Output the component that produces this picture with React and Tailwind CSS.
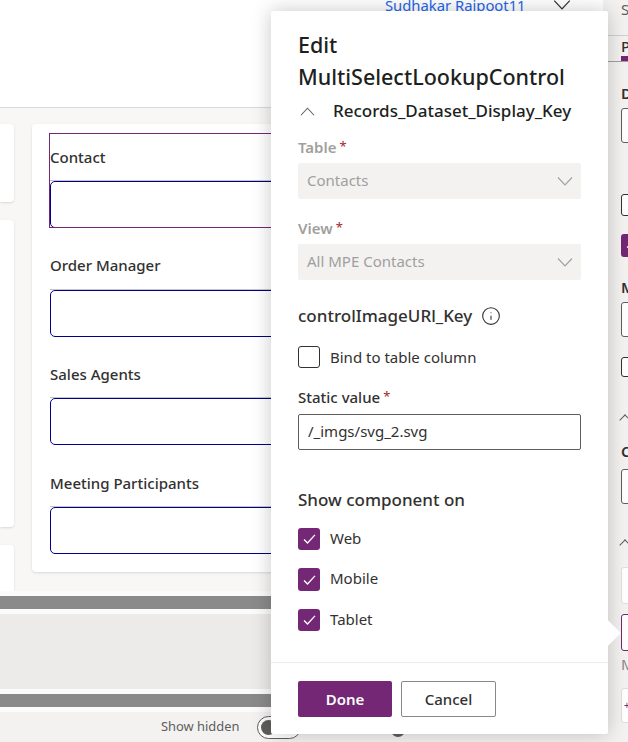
import { Info } from "lucide-react";

const fieldLabels = ["Contact", "Order Manager", "Sales Agents", "Meeting Participants"];
const devices = [
  { name: "Web", cls: "h-[22px]" },
  { name: "Mobile", cls: "h-[23px]" },
  { name: "Tablet", cls: "h-[22px]" },
];

function Chevron({ up = false, className = "" }) {
  return (
    <svg viewBox="0 0 16 9" fill="none" stroke="currentColor" strokeWidth="1.1" className={className}>
      <path d={up ? "M1 8.5 8 1l7 7.5" : "M1 .5 8 8l7-7.5"} />
    </svg>
  );
}

function Tick() {
  return (
    <svg viewBox="0 0 14 11" fill="none" stroke="#fff" strokeWidth="1.5" className="h-[10px] w-[13px]">
      <path d="M1 6l3.8 3.8L13 1" />
    </svg>
  );
}

function DisabledSelect({ label, value }) {
  return (
    <div>
      <div className="flex h-[24px] items-center text-[15px] font-semibold text-[#a19f9d]">
        {label}
        <span className="ml-[3px] text-[13px] font-normal text-[#a4262c]">*</span>
      </div>
      <div className="mt-[4px] flex h-[36px] items-center justify-between rounded-[2px] bg-[#f3f2f1] pb-[2px] pl-[9px] pr-[8px] text-[15px] text-[#a19f9d]">
        {value}
        <Chevron className="mt-[2px] h-[9px] w-[16px]" />
      </div>
    </div>
  );
}

function Field({ label, active }) {
  return (
    <div className="relative w-[520px]">
      <div className="flex h-[47px] items-center pt-[1px] text-[15px] font-medium text-[#323130]">{label}</div>
      <div className="h-[48px] border-t border-[#c8c6c4]">
        <div className="h-[47px] rounded-[5px] border border-[#00008b] bg-white" />
      </div>
      {active && <div className="pointer-events-none absolute -left-px inset-y-0 right-0 border border-[#742774]" />}
    </div>
  );
}

function SidePanel() {
  return (
    <div className="flex w-[25px] shrink-0 flex-col overflow-hidden whitespace-nowrap bg-[#f3f2f1] text-[15px] text-[#605e5c]">
      <div className="h-[36px] border-b border-[#d2d0ce] pl-[18px] leading-[18px]">S</div>
      <div className="h-[26px] border-b border-[#a19f9d] pl-[18px]">
        <div className="font-medium leading-[20px] text-[#323130]">P</div>
        <div className="h-[5px] bg-[#742774]" />
      </div>
      <div className="flex flex-col pl-[18px]">
        <div className="mt-[21px] font-semibold leading-[20px] text-[#323130]">D</div>
        <div className="mt-[5px] h-[35px] w-[40px] rounded-[3px] border border-[#605e5c] bg-white" />
        <div className="mt-[51px] h-[22px] w-[22px] rounded-[3px] border border-[#323130] bg-white" />
        <div className="mt-[18px] flex h-[23px] w-[22px] items-center justify-center rounded-[3px] bg-[#742774]">
          <Tick />
        </div>
        <div className="mt-[20px] font-semibold leading-[20px] text-[#323130]">M</div>
        <div className="mt-[5px] h-[35px] w-[40px] rounded-[3px] border border-[#605e5c] bg-white" />
        <div className="mt-[20px] h-[20px] w-[22px] rounded-[3px] border border-[#323130] bg-white" />
        <div className="mt-[39px] h-[8px] w-[8px] rotate-45 border-l border-t border-[#605e5c]" />
        <div className="mt-[17px] font-semibold leading-[20px] text-[#323130]">C</div>
        <div className="mt-[8px] h-[35px] w-[40px] rounded-[3px] border border-[#605e5c] bg-white" />
        <div className="mt-[37px] h-[8px] w-[8px] rotate-45 border-l border-t border-[#605e5c]" />
        <div className="mt-[18px] h-[37px] w-[40px] rounded-[3px] border border-[#e1dfdd] bg-white" />
        <div className="mt-[10px] h-[37px] w-[40px] rounded-[3px] border border-[#742774] bg-white" />
        <div className="mt-[3px] leading-[20px] text-[#8a8886]">M</div>
        <div className="mt-[14px] flex h-[35px] w-[40px] items-center rounded-[3px] border border-[#e1dfdd] bg-white pl-[2px] text-[10px] text-[#742774]">
          +
        </div>
      </div>
    </div>
  );
}

function Popover() {
  return (
    <div className="absolute left-[271px] top-[11px] flex h-[723px] w-[337px] flex-col rounded-[2px] bg-white shadow-[0_0_20px_rgba(0,0,0,0.22)]">
      <div className="absolute right-[-9px] top-[613px] h-[18px] w-[18px] rotate-45 bg-white" />
      <div className="relative flex flex-1 flex-col px-[27px] pt-[18px]">
        <h2 className="text-[21.5px] font-medium leading-[32px] text-[#201f1e]">
          Edit
          <br />
          MultiSelectLookupControl
        </h2>
        <div className="mt-[1px] flex h-[34px] items-center text-[#605e5c]">
          <Chevron up className="ml-[2px] h-[9px] w-[15px]" />
          <span className="ml-[18px] text-[17px] font-medium text-[#201f1e]">Records_Dataset_Display_Key</span>
        </div>
        <div className="mt-[7px] flex flex-col gap-[17px]">
          <DisabledSelect label="Table" value="Contacts" />
          <DisabledSelect label="View" value="All MPE Contacts" />
        </div>
        <div className="mt-[24px] flex h-[24px] items-center gap-[9px] text-[17px] font-medium text-[#323130]">
          controlImageURl_Key
          <Info size={20} strokeWidth={1.3} />
        </div>
        <label className="mt-[18px] flex h-[22px] items-center gap-[10px] text-[15px] text-[#323130]">
          <span className="h-[22px] w-[22px] rounded-[3px] border border-[#323130]" />
          Bind to table column
        </label>
        <div className="mt-[17px] flex h-[24px] items-center text-[15px] font-medium text-[#323130]">
          Static value
          <span className="ml-[3px] text-[13px] font-normal text-[#a4262c]">*</span>
        </div>
        <div className="mt-[5px] flex h-[36px] items-center rounded-[2px] border border-[#605e5c] pb-[2px] pl-[9px] text-[15px] text-[#323130]">
          /_imgs/svg_2.svg
        </div>
        <div className="mt-[37px] flex h-[26px] items-center text-[17px] font-medium text-[#323130]">
          Show component on
        </div>
        <div className="mt-[15px] flex flex-col gap-[18px]">
          {devices.map((d) => (
            <div key={d.name} className={`flex items-center gap-[10px] text-[15px] text-[#323130] ${d.cls}`}>
              <span className="flex h-full w-[22px] items-center justify-center rounded-[3px] bg-[#742774]">
                <Tick />
              </span>
              <span className="-mt-[2px]">{d.name}</span>
            </div>
          ))}
        </div>
      </div>
      <div className="relative flex h-[72px] items-start gap-[9px] border-t border-[#edebe9] px-[27px] pt-[18px]">
        <button className="h-[36px] w-[94px] rounded-[2px] bg-[#742774] text-[15px] font-semibold text-white">Done</button>
        <button className="h-[36px] w-[95px] rounded-[2px] border border-[#8a8886] bg-white text-[15px] font-medium text-[#323130]">
          Cancel
        </button>
      </div>
    </div>
  );
}

export default function App() {
  return (
    <div
      className="relative flex h-[742px] w-[628px] overflow-hidden bg-white"
      style={{ fontFamily: '"Noto Sans", "Open Sans", sans-serif' }}
    >
      <div className="flex w-[603px] shrink-0 flex-col">
        <header className="flex h-[108px] shrink-0 items-start border-b border-[#d9d9d9] bg-white pl-[385px]">
          <span className="-mt-[5px] text-[14.8px] leading-[20px] text-[#2266ee]">Sudhakar Rajpoot11</span>
          <Chevron className="ml-[27px] h-[10px] w-[18px] text-[#323130]" />
        </header>

        <main className="flex flex-1 gap-[18px] overflow-hidden bg-[#f8f7f6] pt-[16px]">
          <div className="flex w-[14px] shrink-0 flex-col gap-[18px]">
            <div className="h-[78px] shrink-0 rounded-r-[4px] bg-white shadow-sm" />
            <div className="h-[307px] shrink-0 rounded-r-[4px] bg-white shadow-sm" />
            <div className="flex-1 rounded-tr-[4px] bg-white shadow-sm" />
          </div>
          <div className="flex h-[448px] flex-1 flex-col gap-[13.7px] rounded-[4px] bg-white pl-[18px] pt-[9px] shadow-sm">
            {fieldLabels.map((label, i) => (
              <Field key={label} label={label} active={i === 0} />
            ))}
          </div>
        </main>

        <div className="flex h-[121px] shrink-0 flex-col bg-[#fbfbfb] py-[5px]">
          <div className="h-[13px] bg-[#8a8a8a]" />
          <div className="mt-[5px] flex-1 bg-[#ecebe9]" />
          <div className="mt-[5px] h-[13px] bg-[#8a8a8a]" />
        </div>

        <footer className="flex h-[30px] shrink-0 items-center bg-[#f3f2f1] pl-[161px] text-[12.9px] text-[#605e5c]">
          Show hidden
          <span className="ml-[18px] flex h-[23px] w-[44px] items-center rounded-full border border-[#605e5c] bg-white pl-[3px]">
            <span className="h-[15px] w-[15px] rounded-full bg-[#605e5c]" />
          </span>
          <span className="ml-[90px] mt-[6px] h-[14px] w-[14px] rounded-full bg-[#605e5c]" />
        </footer>
      </div>

      <SidePanel />
      <Popover />
    </div>
  );
}
